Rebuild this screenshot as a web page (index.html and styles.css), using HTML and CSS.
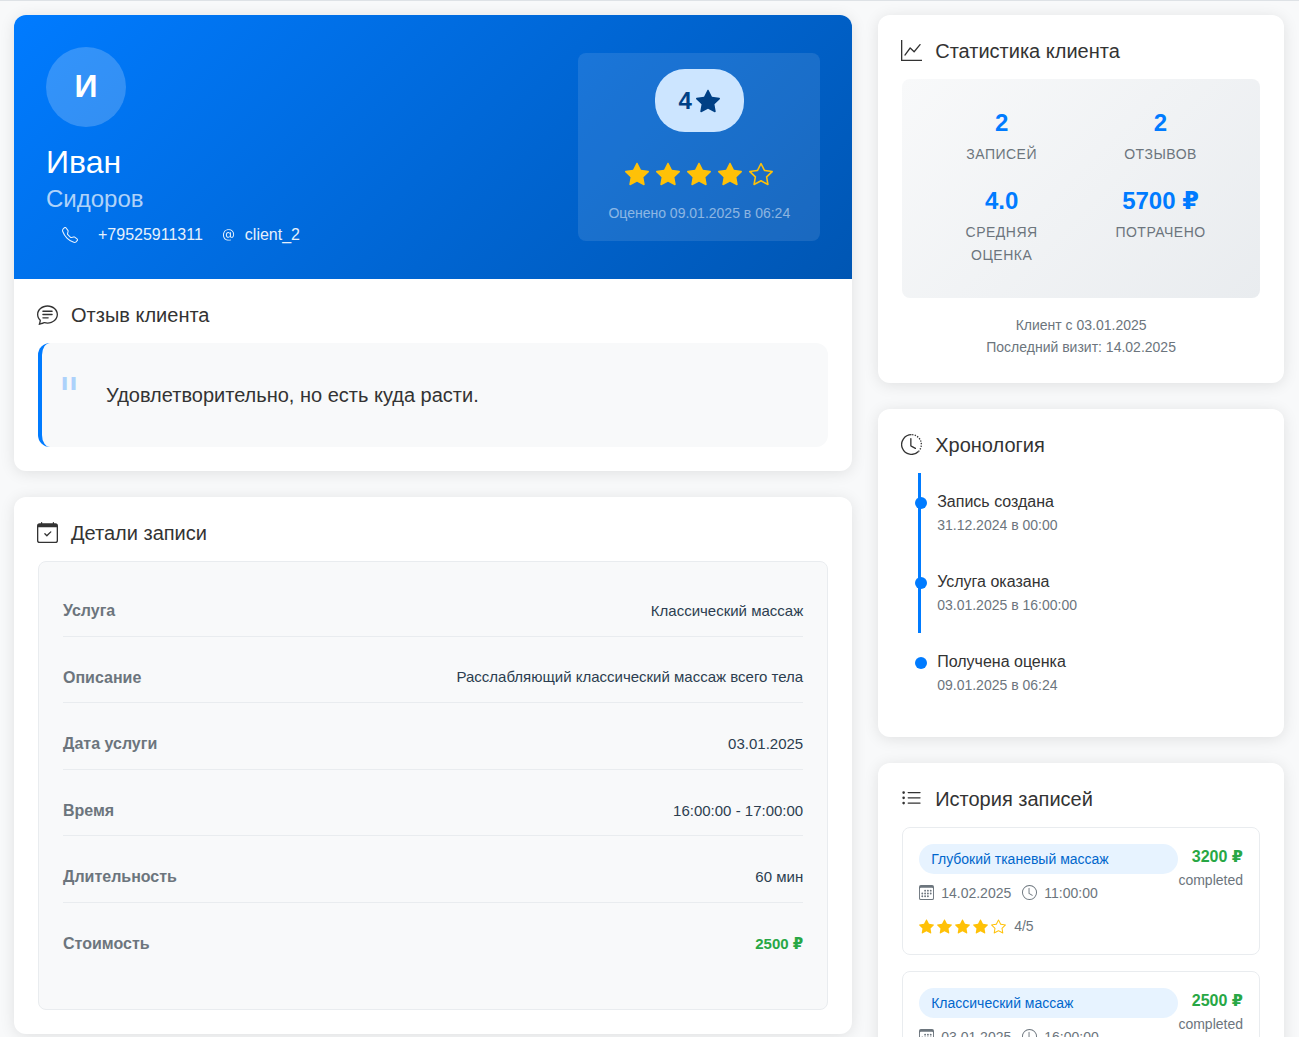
FILE: index.html
```html
<!DOCTYPE html>
<html lang="ru">
<head>
<meta charset="utf-8">
<meta name="viewport" content="width=device-width, initial-scale=1">
<title>Иван Сидоров</title>
<link rel="stylesheet" href="styles.css">
</head>
<body>
<svg class="sprite" aria-hidden="true">
  <symbol id="star-fill" viewBox="0 0 16 16"><path d="M3.612 15.443c-.386.198-.824-.149-.746-.592l.83-4.73L.173 6.765c-.329-.314-.158-.888.283-.95l4.898-.696L7.538.792c.197-.39.73-.39.927 0l2.184 4.327 4.898.696c.441.062.612.636.282.95l-3.522 3.356.83 4.73c.078.443-.36.79-.746.592L8 13.187l-4.389 2.256z"/></symbol>
  <symbol id="star" viewBox="0 0 16 16"><path d="M2.866 14.85c-.078.444.36.791.746.593l4.39-2.256 4.389 2.256c.386.198.824-.149.746-.592l-.83-4.73 3.522-3.356c.33-.314.16-.888-.282-.95l-4.898-.696L8.465.792a.513.513 0 0 0-.927 0L5.354 5.12l-4.898.696c-.441.062-.612.636-.283.95l3.523 3.356-.83 4.73zm4.905-2.767-3.686 1.894.694-3.957a.565.565 0 0 0-.163-.505L1.71 6.745l4.052-.576a.525.525 0 0 0 .393-.288L8 2.223l1.847 3.658a.525.525 0 0 0 .393.288l4.052.575-2.906 2.77a.565.565 0 0 0-.163.506l.694 3.957-3.686-1.894a.503.503 0 0 0-.461 0z"/></symbol>
  <symbol id="telephone" viewBox="0 0 16 16"><path d="M3.654 1.328a.678.678 0 0 0-1.015-.063L1.605 2.3c-.483.484-.661 1.169-.45 1.77a17.568 17.568 0 0 0 4.168 6.608 17.569 17.569 0 0 0 6.608 4.168c.601.211 1.286.033 1.77-.45l1.034-1.034a.678.678 0 0 0-.063-1.015l-2.307-1.794a.678.678 0 0 0-.58-.122l-2.19.547a1.745 1.745 0 0 1-1.657-.459L5.482 8.062a1.745 1.745 0 0 1-.46-1.657l.548-2.19a.678.678 0 0 0-.122-.58L3.654 1.328zM1.884.511a1.745 1.745 0 0 1 2.612.163L6.29 2.98c.329.423.445.974.315 1.494l-.547 2.19a.678.678 0 0 0 .178.643l2.457 2.457a.678.678 0 0 0 .644.178l2.189-.547a1.745 1.745 0 0 1 1.494.315l2.306 1.794c.829.645.905 1.87.163 2.611l-1.034 1.034c-.74.74-1.846 1.065-2.877.702a18.634 18.634 0 0 1-7.01-4.42 18.634 18.634 0 0 1-4.42-7.009c-.362-1.03-.037-2.137.703-2.877L1.885.511z"/></symbol>
  <symbol id="at" viewBox="0 0 16 16"><path d="M13.106 7.222c0-2.967-2.249-5.032-5.482-5.032-3.35 0-5.646 2.318-5.646 5.702 0 3.493 2.235 5.708 5.762 5.708.862 0 1.689-.123 2.304-.335v-.862c-.43.199-1.354.328-2.29.328-2.926 0-4.813-1.88-4.813-4.798 0-2.844 1.921-4.881 4.594-4.881 2.735 0 4.608 1.688 4.608 4.156 0 1.682-.554 2.769-1.416 2.769-.492 0-.772-.28-.772-.76V5.206H8.923v.834h-.11c-.266-.595-.881-.964-1.6-.964-1.4 0-2.378 1.162-2.378 2.823 0 1.737.957 2.906 2.379 2.906.8 0 1.415-.39 1.709-1.087h.11c.081.67.703 1.148 1.503 1.148 1.572 0 2.57-1.415 2.57-3.643zm-7.177.704c0-1.197.54-1.907 1.456-1.907.93 0 1.524.738 1.524 1.907S8.308 9.84 7.371 9.84c-.895 0-1.442-.725-1.442-1.914z"/></symbol>
  <symbol id="chat-text" viewBox="0 0 16 16"><path d="M2.678 11.894a1 1 0 0 1 .287.801 10.97 10.97 0 0 1-.398 2c1.395-.323 2.247-.697 2.634-.893a1 1 0 0 1 .71-.074A8.06 8.06 0 0 0 8 14c3.996 0 7-2.807 7-6 0-3.192-3.004-6-7-6S1 4.808 1 8c0 1.468.617 2.83 1.678 3.894zm-.493 3.905a21.682 21.682 0 0 1-.713.129c-.2.032-.352-.176-.273-.362a9.68 9.68 0 0 0 .244-.637l.003-.01c.248-.72.45-1.548.524-2.319C.743 11.37 0 9.76 0 8c0-3.866 3.582-7 8-7s8 3.134 8 7-3.582 7-8 7a9.06 9.06 0 0 1-2.347-.306c-.52.263-1.639.742-3.468 1.105z"/><path d="M4 5.5a.5.5 0 0 1 .5-.5h7a.5.5 0 0 1 0 1h-7a.5.5 0 0 1-.5-.5zM4 8a.5.5 0 0 1 .5-.5h7a.5.5 0 0 1 0 1h-7A.5.5 0 0 1 4 8zm0 2.5a.5.5 0 0 1 .5-.5h4a.5.5 0 0 1 0 1h-4a.5.5 0 0 1-.5-.5z"/></symbol>
  <symbol id="calendar-check" viewBox="0 0 16 16"><path d="M10.854 7.146a.5.5 0 0 1 0 .708l-3 3a.5.5 0 0 1-.708 0l-1.5-1.5a.5.5 0 1 1 .708-.708L7.5 9.793l2.646-2.647a.5.5 0 0 1 .708 0z"/><path d="M3.5 0a.5.5 0 0 1 .5.5V1h8V.5a.5.5 0 0 1 1 0V1h1a2 2 0 0 1 2 2v11a2 2 0 0 1-2 2H2a2 2 0 0 1-2-2V3a2 2 0 0 1 2-2h1V.5a.5.5 0 0 1 .5-.5zM1 4v10a1 1 0 0 0 1 1h12a1 1 0 0 0 1-1V4H1z"/></symbol>
  <symbol id="graph-up" viewBox="0 0 16 16"><path fill-rule="evenodd" d="M0 0h1v15h15v1H0V0zm14.817 3.113a.5.5 0 0 1 .07.704l-4.5 5.5a.5.5 0 0 1-.74.037L7.06 6.767l-3.656 5.027a.5.5 0 0 1-.808-.588l4-5.5a.5.5 0 0 1 .758-.06l2.609 2.61 4.15-5.073a.5.5 0 0 1 .704-.07z"/></symbol>
  <symbol id="clock-history" viewBox="0 0 16 16"><path fill="none" stroke="currentColor" d="M8 .5a7.5 7.5 0 1 0 5.3 12.8"/><path fill="none" stroke="currentColor" stroke-dasharray="1 1" d="M8.5 .5A7.5 7.5 0 0 1 13.3 13.3"/><path d="M7.5 3a.5.5 0 0 1 .5.5v5.21l3.248 1.856a.5.5 0 0 1-.496.868l-3.5-2A.5.5 0 0 1 7 9V3.5a.5.5 0 0 1 .5-.5z"/></symbol>
  <symbol id="list-ul" viewBox="0 0 16 16"><path fill-rule="evenodd" d="M5 11.5a.5.5 0 0 1 .5-.5h9a.5.5 0 0 1 0 1h-9a.5.5 0 0 1-.5-.5zm0-4a.5.5 0 0 1 .5-.5h9a.5.5 0 0 1 0 1h-9a.5.5 0 0 1-.5-.5zm0-4a.5.5 0 0 1 .5-.5h9a.5.5 0 0 1 0 1h-9a.5.5 0 0 1-.5-.5zm-3 1a1 1 0 1 0 0-2 1 1 0 0 0 0 2zm0 4a1 1 0 1 0 0-2 1 1 0 0 0 0 2zm0 4a1 1 0 1 0 0-2 1 1 0 0 0 0 2z"/></symbol>
  <symbol id="calendar3" viewBox="0 0 16 16"><path d="M14 0H2a2 2 0 0 0-2 2v12a2 2 0 0 0 2 2h12a2 2 0 0 0 2-2V2a2 2 0 0 0-2-2zM1 3.857C1 3.384 1.448 3 2 3h12c.552 0 1 .384 1 .857v10.286c0 .473-.448.857-1 .857H2c-.552 0-1-.384-1-.857V3.857z"/><path d="M6.5 7a1 1 0 1 0 0-2 1 1 0 0 0 0 2zm3 0a1 1 0 1 0 0-2 1 1 0 0 0 0 2zm3 0a1 1 0 1 0 0-2 1 1 0 0 0 0 2zm-9 3a1 1 0 1 0 0-2 1 1 0 0 0 0 2zm3 0a1 1 0 1 0 0-2 1 1 0 0 0 0 2zm3 0a1 1 0 1 0 0-2 1 1 0 0 0 0 2zm3 0a1 1 0 1 0 0-2 1 1 0 0 0 0 2zm-9 3a1 1 0 1 0 0-2 1 1 0 0 0 0 2zm3 0a1 1 0 1 0 0-2 1 1 0 0 0 0 2zm3 0a1 1 0 1 0 0-2 1 1 0 0 0 0 2z"/></symbol>
  <symbol id="clock" viewBox="0 0 16 16"><path d="M8 3.5a.5.5 0 0 0-1 0V9a.5.5 0 0 0 .252.434l3.5 2a.5.5 0 0 0 .496-.868L8 8.71V3.5z"/><path d="M8 16A8 8 0 1 0 8 0a8 8 0 0 0 0 16zm7-8A7 7 0 1 1 1 8a7 7 0 0 1 14 0z"/></symbol>
</svg>
<main class="layout">
  <div class="column">
    <article class="card">
      <header class="client">
        <div>
          <div class="avatar">И</div>
          <h1 class="first-name">Иван</h1>
          <p class="last-name">Сидоров</p>
          <div class="contacts">
            <span class="phone"><svg class="icon"><use href="#telephone"/></svg>+79525911311</span>
            <span class="login"><svg class="icon"><use href="#at"/></svg>client_2</span>
          </div>
        </div>
        <div class="rating">
          <div class="score">4<svg class="icon-lg"><use href="#star-fill"/></svg></div>
          <div class="stars">
            <svg class="icon-lg"><use href="#star-fill"/></svg>
            <svg class="icon-lg"><use href="#star-fill"/></svg>
            <svg class="icon-lg"><use href="#star-fill"/></svg>
            <svg class="icon-lg"><use href="#star-fill"/></svg>
            <svg class="icon-lg"><use href="#star"/></svg>
          </div>
          <p class="rated-at">Оценено 09.01.2025 в 06:24</p>
        </div>
      </header>
      <section class="card-body">
        <h2 class="title"><svg class="title-icon"><use href="#chat-text"/></svg>Отзыв клиента</h2>
        <blockquote class="review">Удовлетворительно, но есть куда расти.</blockquote>
      </section>
    </article>

    <section class="card card-body">
      <h2 class="title"><svg class="title-icon"><use href="#calendar-check"/></svg>Детали записи</h2>
      <dl class="details">
        <div class="detail"><dt>Услуга</dt><dd>Классический массаж</dd></div>
        <div class="detail"><dt>Описание</dt><dd>Расслабляющий классический массаж всего тела</dd></div>
        <div class="detail"><dt>Дата услуги</dt><dd>03.01.2025</dd></div>
        <div class="detail"><dt>Время</dt><dd>16:00:00 - 17:00:00</dd></div>
        <div class="detail"><dt>Длительность</dt><dd>60 мин</dd></div>
        <div class="detail"><dt>Стоимость</dt><dd class="cost">2500 <span class="rub">₽</span></dd></div>
      </dl>
    </section>
  </div>

  <aside class="column">
    <section class="card card-body">
      <h2 class="title"><svg class="title-icon"><use href="#graph-up"/></svg>Статистика клиента</h2>
      <div class="stats">
        <div class="stat"><div class="stat-value">2</div><div class="stat-label">Записей</div></div>
        <div class="stat"><div class="stat-value">2</div><div class="stat-label">Отзывов</div></div>
        <div class="stat"><div class="stat-value">4.0</div><div class="stat-label">Средняя оценка</div></div>
        <div class="stat"><div class="stat-value">5700 <span class="rub">₽</span></div><div class="stat-label">Потрачено</div></div>
      </div>
      <p class="since">Клиент с 03.01.2025<br>Последний визит: 14.02.2025</p>
    </section>

    <section class="card card-body">
      <h2 class="title"><svg class="title-icon"><use href="#clock-history"/></svg>Хронология</h2>
      <ol class="timeline">
        <li class="event"><div>Запись создана</div><div class="muted">31.12.2024 в 00:00</div></li>
        <li class="event"><div>Услуга оказана</div><div class="muted">03.01.2025 в 16:00:00</div></li>
        <li class="event"><div>Получена оценка</div><div class="muted">09.01.2025 в 06:24</div></li>
      </ol>
    </section>

    <section class="card card-body">
      <h2 class="title"><svg class="title-icon"><use href="#list-ul"/></svg>История записей</h2>
      <div class="history">
        <article class="visit">
          <div class="visit-main">
            <div class="service">Глубокий тканевый массаж</div>
            <div class="when"><svg class="icon-sm"><use href="#calendar3"/></svg><span class="date">14.02.2025</span><svg class="icon-sm"><use href="#clock"/></svg>11:00:00</div>
            <div class="visit-stars"><svg class="icon-sm"><use href="#star-fill"/></svg><svg class="icon-sm"><use href="#star-fill"/></svg><svg class="icon-sm"><use href="#star-fill"/></svg><svg class="icon-sm"><use href="#star-fill"/></svg><svg class="icon-sm"><use href="#star"/></svg><span class="muted mark">4/5</span></div>
          </div>
          <div class="visit-side"><div class="cost">3200 <span class="rub">₽</span></div><div class="muted">completed</div></div>
        </article>
        <article class="visit">
          <div class="visit-main">
            <div class="service">Классический массаж</div>
            <div class="when"><svg class="icon-sm"><use href="#calendar3"/></svg><span class="date">03.01.2025</span><svg class="icon-sm"><use href="#clock"/></svg>16:00:00</div>
            <div class="visit-stars"><svg class="icon-sm"><use href="#star-fill"/></svg><svg class="icon-sm"><use href="#star-fill"/></svg><svg class="icon-sm"><use href="#star-fill"/></svg><svg class="icon-sm"><use href="#star-fill"/></svg><svg class="icon-sm"><use href="#star"/></svg><span class="muted mark">4/5</span></div>
          </div>
          <div class="visit-side"><div class="cost">2500 <span class="rub">₽</span></div><div class="muted">completed</div></div>
        </article>
      </div>
    </section>
  </aside>
</main>
</body>
</html>
```
FILE: styles.css
```css
* { box-sizing: border-box; }

html { scrollbar-width: none; }

body {
  margin: 0;
  border-top: 1px solid #dee2e6;
  background: #f8f9fa;
  color: #333;
  font: 16px/1.6 "Liberation Sans", Arial, sans-serif;
}

h1, h2, p, dl, dd, ol, blockquote { margin: 0; padding: 0; }

svg { flex: none; fill: currentColor; }
.sprite { display: none; }
.icon { width: 16px; height: 16px; }
.icon-lg { width: 24px; height: 24px; }
.icon-sm { width: 15px; height: 15px; }

.layout {
  display: grid;
  grid-template-columns: 66% minmax(0, 1fr);
  column-gap: 26px;
  align-items: start;
  padding: 14px 15px 26px 14px;
}

.column { display: grid; gap: 26px; }

.card {
  min-width: 0;
  overflow: hidden;
  border-radius: 12px;
  background: #fff;
  box-shadow: 0 2px 15px rgba(0, 0, 0, .1);
}

.card-body { padding: 24px; }

.title {
  display: flex;
  align-items: flex-start;
  gap: 13px;
  margin-bottom: 16px;
  font-size: 20px;
  font-weight: 400;
  line-height: 24px;
}
.title-icon { width: 21px; height: 21px; margin: 1px 0 0 -1px; }

.muted { color: #6c757d; font-size: 14px; }
.cost { color: #28a745; font-weight: 700; }
.rub { font-family: "DejaVu Sans", sans-serif; line-height: 1; }

/* client header */
.client {
  display: flex;
  justify-content: space-between;
  align-items: center;
  padding: 32px;
  background: linear-gradient(135deg, #007bff 0%, #0056b3 100%);
  color: #fff;
}
.avatar {
  display: grid;
  place-items: center;
  width: 80px;
  height: 80px;
  margin-bottom: 16px;
  border-radius: 50%;
  background: rgba(255, 255, 255, .2);
  font-size: 32px;
  font-weight: 700;
}
.first-name { font-size: 32px; font-weight: 400; line-height: 38px; }
.last-name { font-size: 24px; line-height: 36px; color: rgba(255, 255, 255, .7); }
.contacts {
  display: flex;
  gap: 18px;
  margin-top: 6px;
  padding-left: 16px;
  line-height: 24px;
  opacity: .9;
}
.phone, .login { display: flex; align-items: center; }
.phone { gap: 20px; }
.login { gap: 8px; }

.rating {
  padding: 16px 30px;
  border-radius: 8px;
  background: rgba(255, 255, 255, .1);
  text-align: center;
}
.score {
  display: inline-flex;
  align-items: center;
  gap: 4px;
  padding: 12px 24px;
  border-radius: 30px;
  background: #cce5ff;
  color: #004085;
  font-size: 24px;
  font-weight: 700;
  line-height: 39px;
  vertical-align: top;
}
.stars {
  display: flex;
  justify-content: center;
  align-items: center;
  gap: 7px;
  height: 36px;
  margin-top: 24px;
  color: #ffc107;
}
.rated-at {
  margin-top: 10px;
  color: rgba(255, 255, 255, .5);
  font-size: 14px;
  line-height: 23px;
}

/* review */
.review {
  position: relative;
  padding: 36px 24px 36px 64px;
  border-left: 4px solid #007bff;
  border-radius: 12px;
  background: #f8f9fa;
  font-size: 20px;
}
.review::before {
  content: '"';
  position: absolute;
  top: 28px;
  left: 16px;
  color: #007bff;
  font: 48px/1 "DejaVu Sans", sans-serif;
  opacity: .3;
}

/* booking details */
.details {
  padding: 24px;
  border: 1px solid #e9ecef;
  border-radius: 8px;
  background: #f8f9fa;
}
.detail {
  display: flex;
  justify-content: space-between;
  align-items: center;
  margin-bottom: 16px;
  padding: 12px 0;
  border-bottom: 1px solid #e9ecef;
}
.detail:last-child { border-bottom: 0; }
.detail dt { color: #6c757d; font-weight: 700; }
.detail dd { color: #2c3e50; font-size: 15px; }
.detail .cost { color: #28a745; }

/* statistics */
.stats {
  display: grid;
  grid-template-columns: 1fr 1fr;
  padding: 24px 20px 16px;
  border-radius: 8px;
  background: linear-gradient(135deg, #f8f9fa 0%, #e9ecef 100%);
  text-align: center;
}
.stat { margin-bottom: 15px; padding: 0 12px; }
.stat-value { color: #007bff; font-size: 24px; font-weight: 700; line-height: 40px; }
.stat-label {
  color: #6c757d;
  font-size: 14px;
  line-height: 23px;
  letter-spacing: .5px;
  text-transform: uppercase;
}
.since { margin-top: 16px; color: #6c757d; font-size: 14px; text-align: center; }

/* timeline */
.timeline { margin-left: 16px; list-style: none; }
.event {
  position: relative;
  padding: 16px 0 16px 16px;
  border-left: 3px solid #007bff;
}
.event:last-child { border-left-color: transparent; }
.event::before {
  content: "";
  position: absolute;
  top: 24px;
  left: -6px;
  width: 12px;
  height: 12px;
  border-radius: 50%;
  background: #007bff;
}

/* visit history */
.history { display: grid; gap: 16px; }
.visit {
  display: flex;
  padding: 16px;
  border: 1px solid #e9ecef;
  border-radius: 8px;
}
.visit-main { flex: 1; min-width: 0; }
.visit-side { text-align: right; }
.service {
  padding: 4px 12px;
  border-radius: 16px;
  background: #e7f3ff;
  color: #0066cc;
  font-size: 14px;
  line-height: 22px;
}
.when {
  display: flex;
  align-items: center;
  gap: 7px;
  margin-top: 8px;
  color: #6c757d;
  font-size: 14px;
  line-height: 22px;
}
.date { margin-right: 4px; }
.visit-stars {
  display: flex;
  align-items: center;
  gap: 3px;
  margin-top: 11px;
  color: #ffc107;
  line-height: 23px;
}
.mark { margin-left: 5px; }
```
